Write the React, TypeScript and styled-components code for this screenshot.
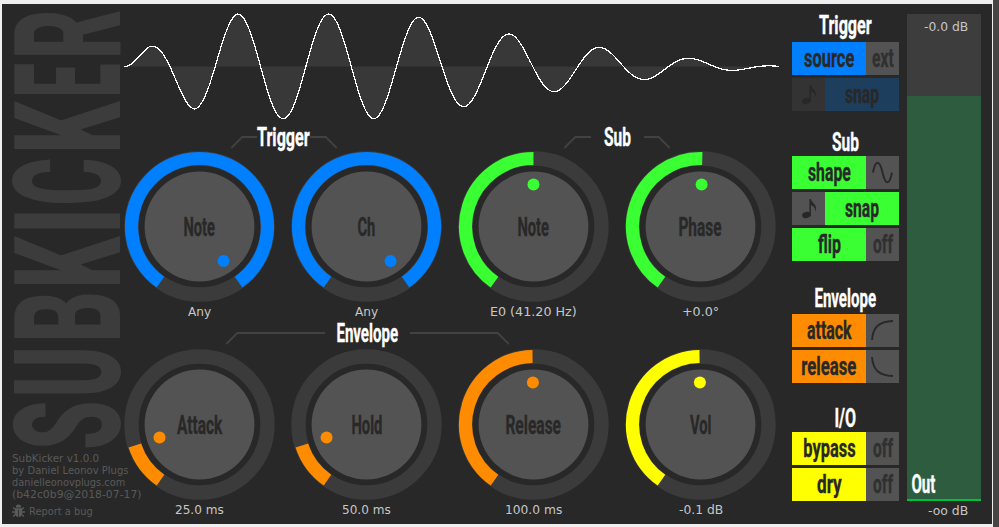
import React from 'react';
import styled, { createGlobalStyle } from 'styled-components';

const BLUE = '#0080ff';
const GREEN = '#39ff33';
const ORANGE = '#ff8c00';
const YELLOW = '#ffff00';
const INK = '#282828';

const DISPLAY = 'Roboto, "Liberation Sans", sans-serif';
const READOUT = '"DejaVu Sans", Verdana, sans-serif';

const GlobalStyle = createGlobalStyle`
  * { box-sizing: border-box; }
  body { margin: 0; background: #efefef; overflow: hidden; }
`;

/* ---------- text fitted to a fixed width ---------- */

const ctx = document.createElement('canvas').getContext('2d')!;

function inkBox(text: string, font: string) {
  ctx.font = font;
  const m = ctx.measureText(text);
  return { left: -m.actualBoundingBoxLeft, width: m.actualBoundingBoxLeft + m.actualBoundingBoxRight };
}

const FitBox = styled.span<{ $w: number; $line: number }>`
  display: block;
  flex: none;
  width: ${(p) => p.$w}px;
  height: ${(p) => p.$line}px;
  line-height: ${(p) => p.$line}px;
  white-space: nowrap;
`;
const FitText = styled.span<{ $font: string; $line: number; $heavy: boolean }>`
  display: inline-block;
  vertical-align: top;
  font: ${(p) => p.$font};
  line-height: ${(p) => p.$line}px;
  transform-origin: 0 50%;
  -webkit-text-stroke: ${(p) => (p.$heavy ? '0.35px currentColor' : '0')};
`;

type FitProps = { text: string; w: number; size?: number; weight?: number; family?: string; line?: number };

function Fit({ text, w, size = 26, weight = 700, family = DISPLAY, line = 26 }: FitProps) {
  const font = `${weight} ${size}px ${family}`;
  const ink = inkBox(text, font);
  return (
    <FitBox $w={w} $line={line}>
      <FitText
        $font={font}
        $line={line}
        $heavy={weight === 700}
        style={{ transform: `scaleX(${w / ink.width}) translateX(${-ink.left}px)` }}
      >
        {text}
      </FitText>
    </FitBox>
  );
}

/* ---------- window ---------- */

const Window = styled.div`
  display: flex;
  width: 999px;
  height: 527px;
  background: #efefef;
`;
const Panel = styled.main`
  display: flex;
  width: 990px;
  height: 520px;
  margin: 4px 1px 3px 2px;
  background: ${INK};
`;
const WindowEdge = styled.div`
  flex: 1;
  background: #474543;
`;

/* ---------- sidebar ---------- */

const Sidebar = styled.aside`
  width: 122px;
  flex: none;
  color: #5a5a5a;
`;
const LogoSvg = styled.svg`
  display: block;
  overflow: visible;
  fill: #3c3c3c;
`;
const Credits = styled.div`
  margin: 2px 0 0 10px;
`;
const BugLink = styled.div`
  display: flex;
  align-items: center;
  gap: 5px;
  margin-top: 4px;
`;

const LETTERS: [string, number, number][] = [
  ['S', 0, 45], ['U', 54, 44], ['B', 110, 44], ['K', 164, 48], ['I', 219, 16],
  ['C', 245, 43.5], ['K', 299, 48], ['E', 354, 30], ['R', 393, 44],
];

function Logo() {
  const font = `900 149px ${DISPLAY}`;
  return (
    <LogoSvg width="122" height="446" viewBox="0 0 122 446">
      <g transform="translate(118 444) rotate(-90)">
        {LETTERS.map(([ch, x, w], i) => {
          const ink = inkBox(ch, font);
          return (
            <text
              key={i}
              fontFamily={DISPLAY}
              fontWeight="900"
              fontSize="149"
              transform={`translate(${x} 0) scale(${w / ink.width} 1) translate(${-ink.left} 0)`}
            >
              {ch}
            </text>
          );
        })}
      </g>
    </LogoSvg>
  );
}

function Bug() {
  return (
    <svg width="13" height="14" viewBox="0 0 13 14" fill="#5a5a5a" stroke="#5a5a5a">
      <path d="M3.8 3.5a2.7 2.9 0 0 1 5.4 0z" stroke="none" />
      <path d="M3 4.3h7v5a3.5 3.7 0 0 1-7 0z" stroke="none" />
      <path d="M3.2 5.5L1 3.4M9.8 5.5L12 3.4M3.2 8H0M9.8 8H13M3.5 10L1.2 12.6M9.5 10l2.3 2.6" strokeWidth="1.3" fill="none" />
      <path d="M6.5 5.5v7.5" stroke={INK} strokeWidth="0.8" />
    </svg>
  );
}

const CREDITS: [string, number][] = [
  ['SubKicker v1.0.0', 86.5],
  ['by Daniel Leonov Plugs', 116],
  ['danielleonovplugs.com', 113],
  ['(b42c0b9@2018-07-17)', 129.5],
];

/* ---------- waveform ---------- */

const Center = styled.section`
  width: 668px;
  flex: none;
`;
const WaveSvg = styled.svg`
  display: block;
`;

const ENVELOPE = [
  [124, 0], [136, 9.5], [149, 20], [194, 43], [215, 49], [237, 52.3], [374, 52.3], [418, 49.3], [463, 40.3], [509, 32.3],
  [554, 25.2], [599, 19], [644, 13.2], [688, 8.2], [731, 4.2], [768, 1], [779, 0],
];

function amplitude(x: number) {
  const i = Math.max(1, ENVELOPE.findIndex(([ex]) => ex >= x));
  const [x0, a0] = ENVELOPE[i - 1];
  const [x1, a1] = ENVELOPE[i];
  return a0 + ((a1 - a0) * (x - x0)) / (x1 - x0);
}

function Waveform() {
  const pts: string[] = [];
  for (let x = 124; x <= 779; x++) {
    const y = 62.4 - amplitude(x) * Math.sin((Math.PI * (x - 124)) / 45.35);
    pts.push(`${x - 124 + 0.5},${y.toFixed(2)}`);
  }
  const line = `M${pts.join('L')}`;
  return (
    <WaveSvg width="666" height="120" viewBox="0 0 666 120">
      <path d={`${line}L655.5,62.5H0Z`} fill="#383838" />
      <path d={line} fill="none" stroke="#fff" strokeWidth="1.25" shapeRendering="crispEdges" />
    </WaveSvg>
  );
}

/* ---------- knobs ---------- */

const HeadingRow = styled.div<{ $after: number }>`
  display: flex;
  height: 26px;
  margin-bottom: ${(p) => p.$after}px;
  color: #fff;
`;
const Group = styled.div<{ $before: number; $gap: number }>`
  display: flex;
  margin-left: ${(p) => p.$before}px;
  gap: ${(p) => p.$gap}px;
`;
const BracketSvg = styled.svg`
  flex: none;
  fill: none;
  stroke: #424242;
  stroke-width: 1.8;
`;

function Bracket({ w, right }: { w: number; right?: boolean }) {
  return (
    <BracketSvg width={w} height="26" viewBox={`0 0 ${w} 26`}>
      <path d={right ? `M0 13H${w - 11.3}L${w - 0.3} 24` : `M${w} 13H11.3L0.3 24`} />
    </BracketSvg>
  );
}

const KnobRow = styled.div<{ $after: number }>`
  display: flex;
  gap: 16px;
  margin-bottom: ${(p) => p.$after}px;
`;
const KnobCell = styled.div`
  display: flex;
  flex-direction: column;
  align-items: center;
  gap: 3px;
  width: 151px;
`;
const KnobFace = styled.div`
  display: grid;
  place-items: center;
  width: 151px;
  height: 151px;
  color: ${INK};
  > * { grid-area: 1 / 1; }
`;
const Readout = styled.div`
  color: #c6c6c6;
  height: 14px;
`;

function polar(r: number, deg: number) {
  const a = (deg * Math.PI) / 180;
  return [75.5 + r * Math.sin(a), 75.5 - r * Math.cos(a)];
}

type KnobProps = { label: string; lw: number; value: string; vw: number; color: string; angle: number };

function Knob({ label, lw, value, vw, color, angle }: KnobProps) {
  const [x0, y0] = polar(68, -145);
  const [x1, y1] = polar(68, angle);
  const [dx, dy] = polar(42, angle);
  return (
    <KnobCell>
      <KnobFace>
        <svg width="151" height="151" viewBox="0 0 151 151">
          <circle cx="75.5" cy="75.5" r="68" fill="none" stroke="#3b3b3b" strokeWidth="14.4" />
          <circle cx="75.5" cy="75.5" r="54.9" fill="#535353" />
          <path
            d={`M${x0} ${y0}A68 68 0 ${angle > 35 ? 1 : 0} 1 ${x1} ${y1}`}
            fill="none"
            stroke={color}
            strokeWidth="13.2"
          />
          <circle cx={dx} cy={dy} r="6" fill={color} />
        </svg>
        <Fit text={label} w={lw} />
      </KnobFace>
      <Readout>
        <Fit text={value} w={vw} size={12} weight={400} family={READOUT} line={14} />
      </Readout>
    </KnobCell>
  );
}

/* ---------- switches ---------- */

const Switches = styled.section`
  width: 107px;
  flex: none;
  padding-top: 8px;
`;
const SwitchGroup = styled.div<{ $before: number; $gap: number }>`
  display: flex;
  flex-direction: column;
  align-items: center;
  margin-top: ${(p) => p.$before}px;
  color: #fff;
  > :first-child { margin-bottom: ${(p) => p.$gap}px; }
`;
const SwitchRow = styled.div`
  display: flex;
  width: 107px;
  height: 33px;
  & + & { margin-top: 3px; }
`;
const SwitchPart = styled.button<{ $bg: string; $wide?: boolean }>`
  display: flex;
  align-items: center;
  justify-content: center;
  width: ${(p) => (p.$wide ? 74 : 33)}px;
  height: 33px;
  padding: 0;
  border: 0;
  color: ${INK};
  background: ${(p) => p.$bg};
`;
const Faded = styled.div`
  color: #303030;
`;
const Glyph = styled.svg`
  display: block;
  fill: none;
  stroke: ${INK};
  stroke-width: 1.9;
`;

const NoteGlyph = () => (
  <Glyph width="33" height="33" viewBox="0 0 33 33">
    <ellipse cx="14.5" cy="23" rx="4.5" ry="3.1" fill={INK} stroke="none" transform="rotate(-12 14.5 23)" />
    <path d="M17.4 7h1.600c.5 3.400 5.200 5.200 5.100 9.300 0 1.200-.4 2.300-1 3.100.3-3.600-1.500-5.400-4.200-6.200v10h-1.500z" fill={INK} stroke="none" />
  </Glyph>
);
const SineGlyph = () => (
  <Glyph width="33" height="33" viewBox="0 0 33 33">
    <path d="M7 16.500C9.500 3.500 13.500 3.500 16.500 16.500S23.500 29.500 26 16.500" />
  </Glyph>
);
const AttackGlyph = () => (
  <Glyph width="33" height="33" viewBox="0 0 33 33">
    <path d="M6 26C7 13 13 7.500 27 7" />
  </Glyph>
);
const ReleaseGlyph = () => (
  <Glyph width="33" height="33" viewBox="0 0 33 33">
    <path d="M6 7C7 20 13 25.500 27 26" />
  </Glyph>
);

function Switch({ text, w, bg, children }: { text: string; w: number; bg: string; children: React.ReactNode }) {
  return (
    <SwitchRow>
      <SwitchPart $wide $bg={bg}><Fit text={text} w={w} size={25} /></SwitchPart>
      <SwitchPart $bg="#535353">{children}</SwitchPart>
    </SwitchRow>
  );
}

function SnapSwitch({ bg, noteBg }: { bg: string; noteBg: string }) {
  return (
    <SwitchRow>
      <SwitchPart $bg={noteBg}><NoteGlyph /></SwitchPart>
      <SwitchPart $wide $bg={bg}><Fit text="snap" w={34} size={25} /></SwitchPart>
    </SwitchRow>
  );
}

const State = ({ text, w }: { text: string; w: number }) => (
  <Faded><Fit text={text} w={w} size={25} /></Faded>
);

/* ---------- output meter ---------- */

const Output = styled.section`
  width: 74px;
  margin: 10px 0 0 8px;
`;
const Meter = styled.div`
  display: flex;
  flex-direction: column;
  height: 487px;
  background: #3d3d3d;
`;
const Peak = styled.div`
  display: flex;
  justify-content: flex-end;
  height: 82px;
  padding: 6px 13px 0 0;
  color: #c6c6c6;
`;
const Level = styled.div`
  display: flex;
  align-items: flex-end;
  flex: 1;
  padding: 0 0 2px 5px;
  color: #fff;
  background: #2e5c3f;
  border-bottom: 2px solid #00c040;
`;
const Floor = styled.div`
  display: flex;
  justify-content: flex-end;
  padding: 3px 13px 0 0;
  color: #c6c6c6;
`;

export default function App() {
  return (
    <Window>
      <GlobalStyle />
      <Panel>
        <Sidebar>
          <Logo />
          <Credits>
            {CREDITS.map(([t, w]) => (
              <Fit key={t} text={t} w={w} size={10.5} weight={400} family={READOUT} line={12} />
            ))}
            <BugLink>
              <Bug />
              <Fit text="Report a bug" w={62} size={10.5} weight={400} family={READOUT} line={12} />
            </BugLink>
          </Credits>
        </Sidebar>

        <Center>
          <Waveform />
          <HeadingRow $after={1}>
            <Group $before={107} $gap={0}>
              <Bracket w={26} />
              <Fit text="Trigger" w={53} />
              <Bracket w={27} right />
            </Group>
            <Group $before={227} $gap={13}>
              <Bracket w={27} />
              <Fit text="Sub" w={26.5} />
              <Bracket w={26} right />
            </Group>
          </HeadingRow>
          <KnobRow $after={1}>
            <Knob label="Note" lw={31} value="Any" vw={23} color={BLUE} angle={145} />
            <Knob label="Ch" lw={17} value="Any" vw={23} color={BLUE} angle={145} />
            <Knob label="Note" lw={31} value="E0 (41.20 Hz)" vw={85} color={GREEN} angle={0} />
            <Knob label="Phase" lw={42.5} value="+0.0°" vw={35} color={GREEN} angle={1.5} />
          </KnobRow>
          <HeadingRow $after={3}>
            <Group $before={102} $gap={12}>
              <Bracket w={99} />
              <Fit text="Envelope" w={61} />
              <Bracket w={99} right />
            </Group>
          </HeadingRow>
          <KnobRow $after={0}>
            <Knob label="Attack" lw={46} value="25.0 ms" vw={48.5} color={ORANGE} angle={-108} />
            <Knob label="Hold" lw={30} value="50.0 ms" vw={48.5} color={ORANGE} angle={-108} />
            <Knob label="Release" lw={55} value="100.0 ms" vw={56} color={ORANGE} angle={-0.8} />
            <Knob label="Vol" lw={21} value="-0.1 dB" vw={44} color={YELLOW} angle={-0.8} />
          </KnobRow>
        </Center>

        <Switches>
          <SwitchGroup $before={0} $gap={4}>
            <Fit text="Trigger" w={53} />
            <Switch text="source" w={50} bg={BLUE}><State text="ext" w={21.5} /></Switch>
            <SnapSwitch bg="#1e3e5e" noteBg="#333333" />
          </SwitchGroup>
          <SwitchGroup $before={18} $gap={1}>
            <Fit text="Sub" w={26.5} />
            <Switch text="shape" w={42.5} bg={GREEN}><SineGlyph /></Switch>
            <SnapSwitch bg={GREEN} noteBg="#535353" />
            <Switch text="flip" w={23} bg={GREEN}><State text="off" w={20} /></Switch>
          </SwitchGroup>
          <SwitchGroup $before={24} $gap={3}>
            <Fit text="Envelope" w={61} />
            <Switch text="attack" w={45} bg={ORANGE}><AttackGlyph /></Switch>
            <Switch text="release" w={54} bg={ORANGE}><ReleaseGlyph /></Switch>
          </SwitchGroup>
          <SwitchGroup $before={22} $gap={1}>
            <Fit text="I/O" w={20.5} />
            <Switch text="bypass" w={51} bg={YELLOW}><State text="off" w={20} /></Switch>
            <Switch text="dry" w={25} bg={YELLOW}><State text="off" w={20} /></Switch>
          </SwitchGroup>
        </Switches>

        <Output>
          <Meter>
            <Peak><Fit text="-0.0 dB" w={44} size={12} weight={400} family={READOUT} line={14} /></Peak>
            <Level><Fit text="Out" w={23.5} /></Level>
          </Meter>
          <Floor><Fit text="-oo dB" w={40} size={12} weight={400} family={READOUT} line={14} /></Floor>
        </Output>
      </Panel>
      <WindowEdge />
    </Window>
  );
}
